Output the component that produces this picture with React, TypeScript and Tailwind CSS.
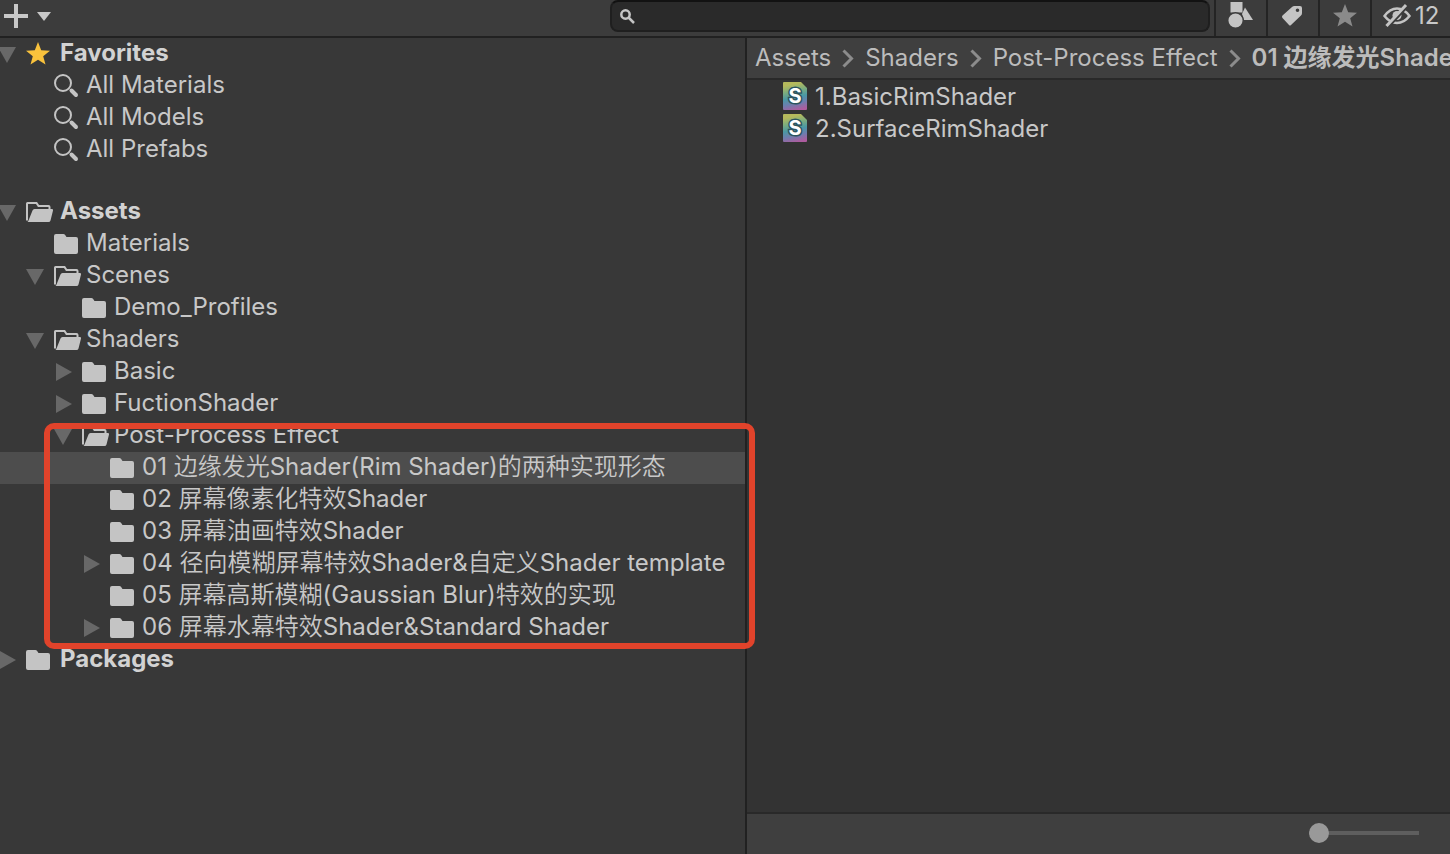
import type { ReactNode } from "react";
import clsx from "clsx";

type Arrow = "open" | "closed";
type IconKind = "star" | "search" | "folder" | "folderOpen";

interface TreeItem {
  label: string;
  level: 0 | 1 | 2 | 3;
  icon: IconKind;
  arrow?: Arrow;
  selected?: boolean;
}

const favorites: TreeItem[] = [
  { label: "Favorites", level: 0, icon: "star", arrow: "open" },
  { label: "All Materials", level: 1, icon: "search" },
  { label: "All Models", level: 1, icon: "search" },
  { label: "All Prefabs", level: 1, icon: "search" },
];

const assets: TreeItem[] = [
  { label: "Assets", level: 0, icon: "folderOpen", arrow: "open" },
  { label: "Materials", level: 1, icon: "folder" },
  { label: "Scenes", level: 1, icon: "folderOpen", arrow: "open" },
  { label: "Demo_Profiles", level: 2, icon: "folder" },
  { label: "Shaders", level: 1, icon: "folderOpen", arrow: "open" },
  { label: "Basic", level: 2, icon: "folder", arrow: "closed" },
  { label: "FuctionShader", level: 2, icon: "folder", arrow: "closed" },
];

const postProcess: TreeItem[] = [
  { label: "Post-Process Effect", level: 2, icon: "folderOpen", arrow: "open" },
  { label: "01 边缘发光Shader(Rim Shader)的两种实现形态", level: 3, icon: "folder", selected: true },
  { label: "02 屏幕像素化特效Shader", level: 3, icon: "folder" },
  { label: "03 屏幕油画特效Shader", level: 3, icon: "folder" },
  { label: "04 径向模糊屏幕特效Shader&自定义Shader template", level: 3, icon: "folder", arrow: "closed" },
  { label: "05 屏幕高斯模糊(Gaussian Blur)特效的实现", level: 3, icon: "folder" },
  { label: "06 屏幕水幕特效Shader&Standard Shader", level: 3, icon: "folder", arrow: "closed" },
];

const packages: TreeItem[] = [{ label: "Packages", level: 0, icon: "folder", arrow: "closed" }];

const crumbs = ["Assets", "Shaders", "Post-Process Effect"];
const files = ["1.BasicRimShader", "2.SurfaceRimShader"];

const indent = ["pl-0", "pl-7", "pl-14", "pl-21"];

const FoldArrow = ({ state }: { state?: Arrow }) => (
  <svg width="26" height="32" viewBox="0 0 26 32" fill="#686868" className="shrink-0 overflow-visible" aria-hidden="true">
    {state === "open" && <path d="M-2 9H16L7 25Z" />}
    {state === "closed" && <path d="M0 7L16 16L0 25Z" />}
  </svg>
);

const TreeIcon = ({ kind }: { kind: IconKind }) => (
  <svg width="28" height="32" viewBox="0 0 28 32" fill="#c4c4c4" className="shrink-0" aria-hidden="true">
    {kind === "star" && (
      <path fill="#f9c23c" d="M12 4L15.2 12.2L24 12.7L17.2 18.2L19.5 26.5L12 21.8L4.5 26.5L6.8 18.2L0 12.7L8.8 12.2Z" />
    )}
    {kind === "search" && (
      <>
        <circle cx="9" cy="13" r="8" fill="none" stroke="#c4c4c4" strokeWidth="2" />
        <path d="M17.500 20.500L22 25" stroke="#c4c4c4" strokeWidth="4" strokeLinecap="round" />
      </>
    )}
    {kind === "folder" && (
      <path d="M2 6H9.500Q11 6 11.500 7.500L12.500 9H22Q24 9 24 11V24Q24 26 22 26H2Q0 26 0 24V8Q0 6 2 6Z" />
    )}
    {kind === "folderOpen" && (
      <>
        <path
          d="M1 24.500V7.500Q1 7 1.500 7H10.500L12.500 10H22.500Q23.500 10 23.500 11V13"
          fill="none"
          stroke="#c4c4c4"
          strokeWidth="2"
        />
        <path d="M8.500 13H26Q27.500 13 27 14.500L24.500 24.500Q24 26 22.500 26H1Q2 26 2.500 24.500L6.500 14.500Q7 13 8.500 13Z" />
      </>
    )}
  </svg>
);

const TreeRow = ({ item }: { item: TreeItem }) => (
  <li>
    <button
      type="button"
      className={clsx("flex h-8 w-full items-center text-left", indent[item.level], item.selected && "bg-[#4d4d4d]")}
    >
      <FoldArrow state={item.arrow} />
      <TreeIcon kind={item.icon} />
      <span
        className={clsx("pb-0.5 leading-7 whitespace-nowrap", item.level === 0 ? "pl-1.5 font-bold text-[#d2d2d2]" : "pl-1")}
      >
        {item.label}
      </span>
    </button>
  </li>
);

const TreeList = ({ items }: { items: TreeItem[] }) => (
  <ul>
    {items.map((item) => (
      <TreeRow key={item.label} item={item} />
    ))}
  </ul>
);

const ToolButton = ({ label, children }: { label: string; children: ReactNode }) => (
  <button
    type="button"
    aria-label={label}
    className="flex h-9 w-[52px] shrink-0 items-start justify-center border-l-2 border-[#242424]"
  >
    {children}
  </button>
);

const Toolbar = () => (
  <header className="flex h-[38px] shrink-0 items-start border-b-2 border-[#212121] bg-[#3c3c3c]">
    <button type="button" aria-label="Create" className="h-8 shrink-0 pl-1">
      <svg width="48" height="32" viewBox="0 0 48 32" fill="#c8c8c8" aria-hidden="true">
        <path d="M10 4H14V14H24V18H14V28H10V18H0V14H10Z" />
        <path d="M33 12H47L40 21Z" />
      </svg>
    </button>
    <label className="ml-auto flex h-8 w-[600px] items-center rounded-lg border-2 border-[#1f1f1f] border-t-[#121212] bg-[#2a2a2a] pl-2">
      <svg width="16" height="16" viewBox="0 0 16 16" fill="none" stroke="#c4c4c4" strokeWidth="2.500" aria-hidden="true">
        <circle cx="5.500" cy="6.500" r="4.200" />
        <path d="M8.500 9.500L14 15" />
      </svg>
      <input type="text" aria-label="Search" className="ml-2 min-w-0 flex-1 bg-transparent text-xl leading-6 outline-none" />
    </label>
    <div className="ml-1 flex shrink-0">
      <ToolButton label="Search by type">
        <svg width="26" height="32" viewBox="0 0 26 32" fill="#c4c4c4" aria-hidden="true">
          <path d="M2.500 2H14.500V12.500H2.500Z" />
          <path d="M17 7.500L25 20H16L14 14Z" />
          <circle cx="7.500" cy="20.500" r="7.800" fill="#c4c4c4" stroke="#3c3c3c" strokeWidth="1.500" />
        </svg>
      </ToolButton>
      <ToolButton label="Search by label">
        <svg width="22" height="32" viewBox="0 0 22 32" fill="#c4c4c4" aria-hidden="true">
          <path
            fillRule="evenodd"
            d="M0.500 15.500L10 7Q11 6 12.500 6H18Q20 6 20 8V13Q20 14.500 19 15.500L9 25Q8 26 7 25L0.500 18Q-0.500 16.800 0.500 15.500ZM15.500 8.500A1.800 1.800 0 1 0 15.500 12.100A1.800 1.800 0 1 0 15.500 8.500Z"
          />
        </svg>
      </ToolButton>
      <ToolButton label="Save search">
        <svg width="24" height="32" viewBox="0 0 24 32" fill="#8a8a8a" aria-hidden="true">
          <path d="M12 4L15.200 12.200L24 12.700L17.200 18.200L19.500 26.500L12 21.800L4.500 26.500L6.800 18.200L0 12.700L8.800 12.200Z" />
        </svg>
      </ToolButton>
      <button type="button" className="flex h-9 w-20 shrink-0 items-start border-l-2 border-[#242424] pl-[11px]">
        <svg width="28" height="32" viewBox="0 0 28 32" fill="none" stroke="#c4c4c4" strokeWidth="2.500" aria-hidden="true">
          <path d="M1.500 16Q7 8.500 14 8.500T26.500 16Q21 23 14 23T1.500 16Z" />
          <circle cx="14" cy="15.500" r="4.500" fill="#c4c4c4" stroke="none" />
          <path d="M5.500 26.500L25 5.500" stroke="#3c3c3c" strokeWidth="3" />
          <path d="M3.500 26L23 5" strokeWidth="3" />
        </svg>
        <span className="pl-1 leading-8">12</span>
      </button>
    </div>
  </header>
);

const ShaderIcon = ({ id }: { id: string }) => (
  <svg width="24" height="32" viewBox="0 0 24 32" className="shrink-0" aria-hidden="true">
    <defs>
      <linearGradient id={id} x1="0.400" y1="0" x2="0.600" y2="1">
        <stop offset="0.080" stopColor="#b5b95c" />
        <stop offset="0.300" stopColor="#7fae7c" />
        <stop offset="0.550" stopColor="#4a98a5" />
        <stop offset="0.750" stopColor="#6b7fae" />
        <stop offset="1" stopColor="#ad5c9f" />
      </linearGradient>
    </defs>
    <path d="M1 1H18L24 7V28Q24 29 23 29H1Q0 29 0 28V2Q0 1 1 1Z" fill={`url(#${id})`} />
    <text
      x="12"
      y="22"
      textAnchor="middle"
      fontSize="20"
      fontWeight="700"
      fill="#fff"
      stroke="#2d5560"
      strokeWidth="3"
      paintOrder="stroke"
    >
      S
    </text>
  </svg>
);

const Chevron = () => (
  <svg width="12" height="20" viewBox="0 0 12 20" fill="none" stroke="#8c8c8c" strokeWidth="3" className="mx-[11px] shrink-0" aria-hidden="true">
    <path d="M1.500 2.500L9.500 10.500L1.500 18.500" />
  </svg>
);

const Breadcrumbs = () => (
  <nav className="flex h-[42px] shrink-0 items-center overflow-hidden border-b-2 border-[#292929] bg-[#3f3f3f] pl-2 leading-8 whitespace-nowrap text-[#bcbcbc]">
    {crumbs.map((crumb) => (
      <span key={crumb} className="flex items-center">
        <a href="#">{crumb}</a>
        <Chevron />
      </span>
    ))}
    <a href="#" className="font-semibold">
      01 边缘发光Shader(Rim Shader)的两种实现形态
    </a>
  </nav>
);

export default function App() {
  return (
    <div className="flex h-screen flex-col overflow-hidden bg-[#383838] font-[Inter,'Noto_Sans_CJK_SC',sans-serif] text-2xl text-[#c8c8c8]">
      <Toolbar />
      <div className="flex min-h-0 flex-1">
        <aside className="z-10 w-[747px] shrink-0 border-r-2 border-[#212121] font-[Inter,'Noto_Sans_CJK_SC_DemiLight','Noto_Sans_CJK_SC_Light','Noto_Sans_CJK_SC',sans-serif]">
          <TreeList items={favorites} />
          <div className="mt-[30px]">
            <TreeList items={assets} />
            <div className="relative">
              <TreeList items={postProcess} />
              {/* highlight frame, runs a little past the splitter */}
              <div className="pointer-events-none absolute top-[3px] -right-[10px] -bottom-[5px] left-11 rounded-[10px] border-6 border-[#e1432b]" />
            </div>
            <TreeList items={packages} />
          </div>
        </aside>
        <main className="flex min-w-0 flex-1 flex-col bg-[#333333]">
          <Breadcrumbs />
          <ul className="flex-1 pt-px">
            {files.map((file, i) => (
              <li key={file}>
                <button type="button" className="flex h-8 w-full items-center pl-9 text-left">
                  <ShaderIcon id={i === 0 ? "shader-a" : "shader-b"} />
                  <span className="pl-2 leading-7">{file}</span>
                </button>
              </li>
            ))}
          </ul>
          <footer className="flex h-[42px] shrink-0 items-center justify-end border-t-2 border-[#292929] bg-[#3f3f3f] pr-[31px] pb-0.5">
            <input
              type="range"
              aria-label="Icon size"
              min={0}
              max={100}
              defaultValue={0}
              className="h-5 w-[110px] appearance-none bg-transparent [&::-webkit-slider-runnable-track]:h-1 [&::-webkit-slider-runnable-track]:bg-[#5e5e5e] [&::-webkit-slider-thumb]:-mt-2 [&::-webkit-slider-thumb]:size-5 [&::-webkit-slider-thumb]:appearance-none [&::-webkit-slider-thumb]:rounded-full [&::-webkit-slider-thumb]:bg-[#999999]"
            />
          </footer>
        </main>
      </div>
    </div>
  );
}
